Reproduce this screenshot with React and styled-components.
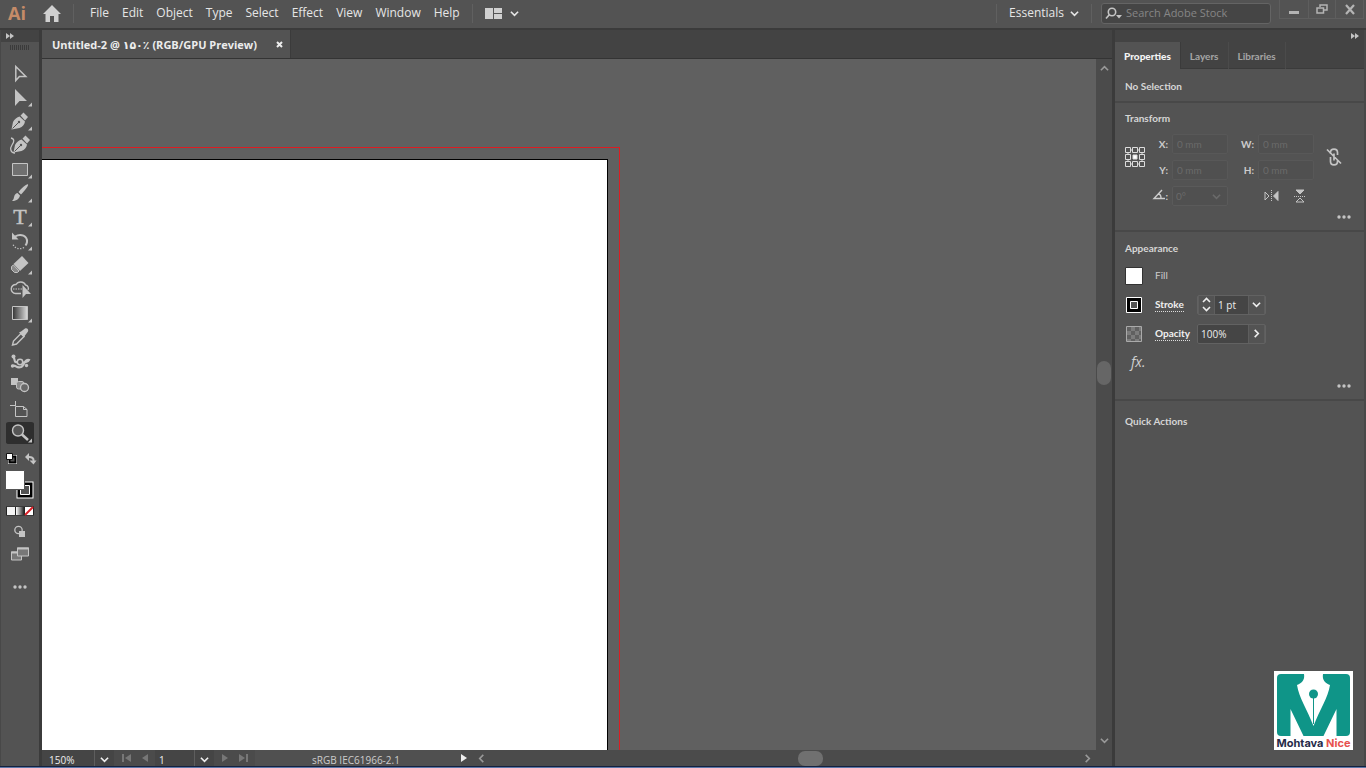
import React from "react";
import styled, { createGlobalStyle } from "styled-components";

const panel = "#535353";
const dark = "#434343";
const line = "#3b3b3b";
const soft = "#5e5e5e";
const field = "#454545";
const icon = "#c4c4c4";
const text = "#d6d6d6";
const muted = "#a6a6a6";

const GlobalStyle = createGlobalStyle`
  * {
    box-sizing: border-box;
  }

  body {
    margin: 0;
    background: ${panel};
    color: ${text};
    font-family: "Open Sans", "DejaVu Sans", sans-serif;
    font-size: 10px;
    line-height: 14px;
  }

  button, input {
    margin: 0;
    padding: 0;
    border: 0;
    background: none;
    color: inherit;
    font: inherit;
    outline: none;
    min-width: 0;
  }

  button {
    display: flex;
    align-items: center;
    justify-content: center;
    flex-shrink: 0;
  }

  svg {
    display: block;
    overflow: visible;
  }
`;

const Window = styled.div`
  display: grid;
  grid-template-rows: 30px 1fr 2px;
  height: 100vh;
`;

const Header = styled.header`
  display: flex;
  align-items: center;
  padding: 0 0 2px 8px;
  border-bottom: 2px solid ${line};
`;

const Brand = styled.span`
  width: 35px;
  color: #c58b68;
  font-size: 18px;
  font-weight: 700;
  line-height: 24px;
`;

const Divider = styled.span`
  width: 1px;
  height: 19px;
  margin: 0 ${(p) => p.$after || 12}px 0 ${(p) => p.$before || 12}px;
  background: #606060;
`;

const Menu = styled.nav`
  display: flex;
  gap: 13px;
`;

const MenuButton = styled.button`
  color: #e6e6e6;
  font-size: 12px;
  line-height: 16px;
  gap: ${(p) => p.$gap || 0}px;
`;

const Spacer = styled.div`
  flex: ${(p) => p.$grow || 1};
`;

const Search = styled.label`
  display: flex;
  align-items: center;
  gap: 4px;
  width: 170px;
  height: 21px;
  padding-left: 3px;
  border: 1px solid #646464;
  border-radius: 3px;
  background: ${field};
  color: ${icon};
`;

const SearchInput = styled.input`
  flex: 1;
  font-size: 11px;

  &::placeholder {
    color: #868686;
    opacity: 1;
  }
`;

const WindowControls = styled.div`
  display: grid;
  grid-template-columns: repeat(3, 1fr);
  align-self: flex-start;
  width: 85px;
  height: 19px;
  margin: 0 2px 0 8px;
  border: 1px solid ${soft};
  border-top: 0;
  color: #b4b4b4;

  button + button {
    border-left: 1px solid ${soft};
  }
`;

const Body = styled.div`
  display: grid;
  grid-template-columns: 42px 1fr 254px;
  min-height: 0;
`;

const Tools = styled.aside`
  display: flex;
  flex-direction: column;
  align-items: center;
  border-left: 1px solid #484848;
  border-right: 3px solid ${line};
  color: ${icon};
`;

const Collapse = styled.div`
  display: flex;
  align-items: center;
  justify-content: ${(p) => p.$end ? "flex-end" : "flex-start"};
  align-self: stretch;
  height: 12px;
  padding: 0 5px;
  background: ${dark};
  color: ${icon};
`;

const Grip = styled.div`
  width: 20px;
  height: 5px;
  margin: 3px 0 11px;
  background: repeating-linear-gradient(90deg, ${line} 0 1px, ${panel} 1px 2px);
`;

const Tool = styled.button`
  width: 28px;
  height: ${(p) => p.$height || 24}px;
  border-radius: 3px;
  background: ${(p) => p.$active ? "#2e2e2e" : "none"};
  background-clip: content-box;
  padding: ${(p) => p.$active ? "1px 0" : 0};
`;

const Document = styled.main`
  display: grid;
  grid-template-rows: 29px 1fr 16px;
  min-width: 0;
`;

const TabBar = styled.div`
  display: flex;
  background: ${dark};
  border-bottom: 1px solid #343434;
`;

const DocumentTab = styled.div`
  display: flex;
  align-items: center;
  justify-content: space-between;
  width: 249px;
  padding: 1px 7px 0 10px;
  border-right: 1px solid ${line};
  background: ${panel};
  color: #ececec;
  font-size: 11px;
  font-weight: 700;
`;

const Workspace = styled.div`
  display: grid;
  grid-template-columns: 1fr 16px;
  min-height: 0;
`;

const Canvas = styled.div`
  position: relative;
  overflow: hidden;
  background: #606060;
`;

const Bleed = styled.div`
  position: absolute;
  top: 88px;
  bottom: 0;
  left: 0;
  width: 578px;
  border: 0 solid #dd1c22;
  border-width: 1px 1px 0 0;
`;

const Artboard = styled.div`
  position: absolute;
  top: 100px;
  bottom: 0;
  left: 0;
  width: 566px;
  border: 0 solid #000;
  border-width: 1px 1px 0 0;
  background: #fff;
`;

const VerticalScroll = styled.div`
  display: flex;
  flex-direction: column;
  align-items: center;
  padding: 5px 0;
  background: #4b4b4b;
  color: #999;
`;

const Thumb = styled.span`
  width: ${(p) => p.$wide ? 25 : 14}px;
  height: ${(p) => p.$wide ? 15 : 24}px;
  border-radius: 7px;
  background: ${(p) => p.$wide ? "#707070" : "#666"};
`;

const StatusBar = styled.footer`
  display: flex;
  align-items: stretch;
  background: #4b4b4b;
  color: #eee;
`;

const StatusField = styled.label`
  display: flex;
  width: ${(p) => p.$width}px;
  padding-left: ${(p) => p.$inset}px;
  background: ${field};

  input {
    flex: 1;
    padding-top: 3px;
  }

  button {
    width: 20px;
    padding-top: 2px;
    border-left: 1px solid ${soft};
  }
`;

const Pager = styled.div`
  display: flex;
  align-items: center;
  justify-content: center;
  gap: 11px;
  width: 41px;
  color: #777;
`;

const Profile = styled.div`
  flex: 0 0 206px;
  padding: 3px 4px 0 0;
  background: #505050;
  color: #ccc;
  text-align: center;
`;

const HorizontalScroll = styled.div`
  flex: 1;
  display: flex;
  align-items: center;
  padding: 0 20px 0 10px;
  color: #999;
`;

const Properties = styled.aside`
  display: flex;
  flex-direction: column;
  border-left: 3px solid ${line};
  border-right: 2px solid #484848;
  font-family: Lato, sans-serif;
`;

const PanelTabs = styled.div`
  display: flex;
  height: 27px;
  background: ${dark};
  border-bottom: 1px solid ${line};
`;

const PanelTab = styled.button`
  height: 27px;
  padding: 0 9px;
  background: ${(p) => p.$active ? panel : "none"};
  border-right: 1px solid ${(p) => p.$active ? line : "#4b4b4b"};
  color: ${(p) => p.$active ? "#f4f4f4" : muted};
  font-weight: ${(p) => p.$active ? 900 : 700};
`;

const Section = styled.section`
  display: flex;
  flex-direction: column;
  padding: ${(p) => p.$top || 10}px 12px ${(p) => p.$bottom || 10}px 10px;
  border-bottom: ${(p) => p.$last ? 0 : "2px solid #484848"};
`;

const Title = styled.h2`
  margin: 0;
  color: ${text};
  font-size: 10px;
  font-weight: 700;
  line-height: 14px;
`;

const TransformGrid = styled.div`
  display: grid;
  grid-template-columns: 20px 19px 56px 22px 56px 32px;
  grid-template-rows: repeat(3, 20px);
  gap: 6px 4px;
  align-items: center;
  margin-top: 9px;
`;

const Reference = styled.button`
  grid-row: 1 / 3;
`;

const Link = styled.button`
  grid-row: 1 / 3;
  grid-column: 6;
`;

const FieldLabel = styled.label`
  display: flex;
  justify-content: flex-end;
  color: #ccc;
  font-weight: 700;
`;

const Measure = styled.input`
  width: 56px;
  height: 20px;
  padding-left: 4px;
  border: 1px solid #585858;
  border-radius: 2px;
  background: #505050;

  &:disabled {
    color: #6a6a6a;
  }
`;

const Angle = styled.div`
  display: flex;
  align-items: center;
  width: 56px;
  height: 20px;
  padding-right: 6px;
  border: 1px solid #5a5a5a;
  border-radius: 2px;
  background: #505050;
  color: #6a6a6a;

  input {
    flex: 1;
    padding-left: 3px;
  }
`;

const Flips = styled.div`
  grid-column: 5 / 7;
  display: flex;
  gap: 16px;
  padding-left: 6px;
`;

const More = styled.button`
  align-self: flex-end;
  height: 6px;
  margin: ${(p) => p.$top}px 1px 0 0;
`;

const Rows = styled.div`
  margin-top: 6px;
`;

const Row = styled.div`
  display: grid;
  grid-template-columns: 18px 30px auto;
  column-gap: 12px;
  align-items: center;
  height: 29px;
`;

const Option = styled.label`
  justify-self: start;
  border-bottom: ${(p) => p.$linked ? "1px dotted #ddd" : 0};
  color: ${(p) => p.$linked ? "#f0f0f0" : "#ccc"};
  font-weight: ${(p) => p.$linked ? 700 : 400};
  line-height: 13px;
`;

const Combo = styled.div`
  display: flex;
  width: 69px;
  height: 20px;
  border: 1px solid #626262;
  border-radius: 2px;
  background: ${field};
  color: #eee;
  font-family: "Open Sans", sans-serif;

  input {
    flex: 1;
    padding-left: 3px;
  }

  button {
    width: 17px;
    background: ${panel};
    border: 0 solid ${soft};
    border-width: 0 1px;
  }
`;

const Effects = styled.button`
  align-self: flex-start;
  margin: 5px 0 0 6px;
  color: #d0d0d0;
  font-family: "Open Sans", sans-serif;
  font-size: 14px;
  font-style: italic;
  line-height: 18px;
`;

const TaskEdge = styled.div`
  border-top: 1px solid #14213d;
  background: #5b76a8;
`;

const Watermark = styled.div`
  position: fixed;
  right: 13px;
  bottom: 18px;
  width: 79px;
  height: 79px;
  background: #fff;
  color: #262a48;
  font-family: Inter, sans-serif;
  font-size: 11px;
  font-weight: 700;
  line-height: 14px;
  text-align: center;
  white-space: nowrap;

  em {
    color: #e7524e;
    font-style: normal;
  }
`;

const Chevron = ({ dir = "down", size = 9 }) => {
  const turn = { down: 0, left: 90, up: 180, right: 270 }[dir];
  return (
    <svg width={size} height={size} viewBox="0 0 10 10" fill="none" stroke="currentColor" strokeWidth="1.8">
      <path d="M1 3l4 4 4-4" transform={`rotate(${turn} 5 5)`} />
    </svg>
  );
};

const DoubleArrow = () => (
  <svg width="8" height="6" fill="currentColor">
    <path d="M0 0l4 3-4 3zM4 0l4 3-4 3z" />
  </svg>
);

const Dots = () => (
  <svg width="14" height="4" fill={icon}>
    <circle cx="2" cy="2" r="1.7" />
    <circle cx="7" cy="2" r="1.7" />
    <circle cx="12" cy="2" r="1.7" />
  </svg>
);

const nib = (
  <>
    <path d="M5.5 20.500l1.500-7.500c1.500-3 4-4.500 6.500-5.500l5.500 5c-.5 3-2.500 5.500-5.500 6.500zM14.500 6.500L17.500 3.500l4.500 4.500-3 3.500z" fill="currentColor" />
    <path d="M6.500 19.500l6-6" stroke={panel} />
    <circle cx="13" cy="13" r="1.2" fill={panel} />
  </>
);

const tools = [
  { name: "Selection", art: <path d="M9.8 5.5v14l3.6-4h6.4z" fill="none" stroke="currentColor" strokeWidth="1.5" /> },
  { name: "Direct Selection", more: true, art: <path d="M9 4v17l4.5-5H21z" fill="currentColor" /> },
  { name: "Pen", more: true, art: nib },
  {
    name: "Curvature",
    art: (
      <>
        <g transform="translate(2 -1)">{nib}</g>
        <path d="M5 5c4 1 3 4 1 7s-2 8 3 8" fill="none" stroke="currentColor" strokeWidth="1.3" />
      </>
    ),
  },
  { name: "Rectangle", more: true, art: <path d="M6.5 6.5h15v12h-15z" fill="#707070" stroke="currentColor" /> },
  {
    name: "Paintbrush",
    more: true,
    art: (
      <path d="M22 3.5c1 1-4 7-7 10l-2.5-2.5c3-3.5 8.5-8.5 9.5-7.5zM11.5 12l2.5 2.5c-1 4-4 5.5-8 5.5 2-1.5 1.5-3 2.5-5.5 .7-1.7 2-2 3-2.500z" fill="currentColor" />
    ),
  },
  {
    name: "Type",
    more: true,
    art: (
      <text
        x="14"
        y="19"
        textAnchor="middle"
        fontFamily="Liberation Serif, serif"
        fontSize="22"
        fill="currentColor"
        stroke="currentColor"
        strokeWidth="0.5"
      >
        T
      </text>
    ),
  },
  {
    name: "Rotate",
    more: true,
    art: (
      <g fill="none" stroke="currentColor">
        <path d="M9 7.5c6-3.5 12.5-.5 12 5.5-.2 1.5-.8 2.5-1.5 3.5" strokeWidth="2" />
        <path d="M18 18.5c-4 2.5-9 1-11-3" strokeWidth="1.3" strokeDasharray="1.3 1.5" />
        <path d="M6 3.5v7h6.5z" fill="currentColor" stroke="none" />
      </g>
    ),
  },
  {
    name: "Eraser",
    more: true,
    art: (
      <>
        <path d="M16 3l6.500 7-8.500 8-6.500-7z" fill="currentColor" />
        <path d="M7.500 12l5.500 6-1.500 1.500h-3l-3-3v-3z" fill="#8a8a8a" stroke="currentColor" />
      </>
    ),
  },
  {
    name: "Shape Builder",
    art: (
      <>
        <path d="M15 16.500H9.500a4.500 4.500 0 1 1 .5-9c2-3.500 8-3.500 9.500.5 2.500.5 3.500 3 2.500 5" fill="none" stroke="currentColor" strokeWidth="1.4" />
        <path d="M7 12h10" stroke="currentColor" strokeDasharray="1.5 1" />
        <path d="M16.500 8v13l3.500-4h5z" fill="currentColor" />
      </>
    ),
  },
  {
    name: "Gradient",
    more: true,
    art: (
      <>
        <linearGradient id="tool-gradient">
          <stop stopColor="#333" />
          <stop offset="1" stopColor="#ddd" />
        </linearGradient>
        <path d="M6.5 5.5h15v13h-15z" fill="url(#tool-gradient)" stroke="currentColor" />
      </>
    ),
  },
  {
    name: "Eyedropper",
    art: (
      <>
        <path d="M6.5 20l1-4 7.5-7.5 3 3-7.5 7.5z" fill="none" stroke="currentColor" strokeWidth="1.4" />
        <path d="M13 7.5l2-1 4-3c2-1 4 1 3 3l-3 4-1 2z" fill="currentColor" />
      </>
    ),
  },
  {
    name: "Puppet Warp",
    art: (
      <>
        <path d="M6 17c4-2 4 3 9 1 4-2 3-8 8-7-1 3-4 1-6 3M7 7c3 4 0 7 5 6" fill="none" stroke="currentColor" strokeWidth="2.2" />
        <circle cx="14" cy="13" r="2.7" fill={panel} stroke="currentColor" strokeWidth="1.5" />
        <circle cx="7.5" cy="7.5" r="2" fill="currentColor" />
        <circle cx="6.5" cy="17" r="1.7" fill="currentColor" />
        <circle cx="20.5" cy="16.5" r="1.7" fill="currentColor" />
      </>
    ),
  },
  {
    name: "Blend",
    art: (
      <>
        <path d="M5 5h7v7H5z" fill="currentColor" />
        <rect x="10.5" y="8.5" width="7.5" height="7.5" rx="2" fill="#8b8b8b" stroke="currentColor" />
        <circle cx="18.5" cy="14.5" r="4" fill="#686868" stroke="currentColor" strokeWidth="1.3" />
      </>
    ),
  },
  {
    name: "Artboard",
    art: (
      <path d="M4 8.5h6M9.5 4v5M9.5 9.5h8l3.5 3v7H9.5zM17.5 9.5v3H21" fill="none" stroke="currentColor" />
    ),
  },
  {
    name: "Zoom",
    more: true,
    active: true,
    art: (
      <>
        <circle cx="12" cy="9.5" r="5.5" fill="#555" stroke="currentColor" strokeWidth="1.4" />
        <path d="M16 13.500l6 5.500" stroke="currentColor" strokeWidth="2.5" />
      </>
    ),
  },
];

const ToolBar = () => (
  <Tools>
    <Collapse><DoubleArrow /></Collapse>
    <Grip />
    {tools.map(({ name, art, more, active }) => (
      <Tool key={name} aria-label={name} $active={active}>
        <svg width="28" height="24">
          {art}
          {more && <path d="M26 17.5v4h-4z" fill="currentColor" />}
        </svg>
      </Tool>
    ))}
    <Tool $height={25} aria-label="Default and swap colors">
      <svg width="28" height="24">
        <path d="M3.500 10.500h6v6h-6z" fill={panel} stroke="#fff" strokeWidth="3" />
        <path d="M3.500 10.500h6v6h-6z" fill={panel} stroke="#000" strokeWidth="2" />
        <path d="M.5 7.5h6v6h-6z" fill="#fff" stroke="#111" />
        <path d="M22 11c4-.5 6 1.5 5.500 4" fill="none" stroke="currentColor" strokeWidth="2" />
        <path d="M19 11l4-4v8zM23.500 14.500h7l-3 4z" fill="currentColor" />
      </svg>
    </Tool>
    <Tool $height={32} aria-label="Fill and stroke">
      <svg width="28" height="32">
        <path d="M14.5 15.5h9v9h-9z" fill={panel} stroke="#fff" strokeWidth="8" />
        <path d="M14.5 15.5h9v9h-9z" fill={panel} stroke="#000" strokeWidth="6" />
        <path d="M14.5 15.5h9v9h-9z" fill={panel} stroke="#fff" />
        <path d="M-.5.5h19v19h-19z" fill="#fff" stroke="#555" />
      </svg>
    </Tool>
    <Tool $height={18} aria-label="Fill type">
      <svg width="28" height="10">
        <linearGradient id="mode-gradient">
          <stop stopColor="#fff" />
          <stop offset="1" stopColor="#222" />
        </linearGradient>
        <path d="M0 .5h28v9H0z" fill="#222" />
        <path d="M1 1h8v8H1z" fill="#f4f4f4" />
        <path d="M10 1h8v8h-8z" fill="url(#mode-gradient)" />
        <path d="M19 1h8v8h-8z" fill="#fff" />
        <path d="M19 9l8-8" stroke="#d92128" strokeWidth="2" />
      </svg>
    </Tool>
    <Tool $height={21} aria-label="Drawing mode">
      <svg width="28" height="14" fill="currentColor">
        <circle cx="12.500" cy="6" r="3.700" fill="none" stroke="currentColor" strokeWidth="1.300" />
        <path d="M13 7h6v6h-6z" />
      </svg>
    </Tool>
    <Tool $height={26} aria-label="Screen mode">
      <svg width="28" height="16">
        <path d="M5.5 6h10v8h-10z" fill="#777" stroke="currentColor" />
        <path d="M5 6.5h11" stroke="currentColor" strokeWidth="2" />
        <path d="M11.5 2h11v8h-11z" fill="#777" stroke="currentColor" />
        <path d="M11 2.5h12" stroke="currentColor" strokeWidth="2" />
      </svg>
    </Tool>
    <Tool $height={40} aria-label="Edit toolbar"><Dots /></Tool>
  </Tools>
);

const menus = ["File", "Edit", "Object", "Type", "Select", "Effect", "View", "Window", "Help"];

const TopBar = () => (
  <Header>
    <Brand>Ai</Brand>
    <button aria-label="Home">
      <svg width="18" height="17" fill="#d0d0d0">
        <path d="M9 0l9 9h-2.5v8H11v-6H7v6H2.5V9H0z" />
      </svg>
    </button>
    <Divider $after={16} />
    <Menu>
      {menus.map((name) => (
        <MenuButton key={name}>{name}</MenuButton>
      ))}
    </Menu>
    <Divider />
    <MenuButton aria-label="Arrange documents" $gap={8}>
      <svg width="17" height="11" fill="#d0d0d0">
        <path d="M0 0h8v11H0zM9 0h8v5H9zM9 6h8v5H9z" />
      </svg>
      <Chevron />
    </MenuButton>
    <Spacer />
    <Divider />
    <MenuButton $gap={6}>Essentials<Chevron /></MenuButton>
    <Divider $after={9} />
    <Search>
      <svg width="17" height="13" fill="none" stroke="currentColor" strokeWidth="1.6">
        <circle cx="7" cy="5" r="3.7" />
        <path d="M4.5 7.5L1 11.5" />
        <path d="M11 8h6l-3 3.5z" fill="currentColor" stroke="none" />
      </svg>
      <SearchInput placeholder="Search Adobe Stock" aria-label="Search Adobe Stock" />
    </Search>
    <WindowControls>
      <button aria-label="Minimize">
        <svg width="10" height="10"><path d="M0 7h10v3H0z" fill="currentColor" /></svg>
      </button>
      <button aria-label="Restore">
        <svg width="12" height="10" fill="none" stroke="currentColor" strokeWidth="1.5">
          <path d="M4 3V1h7v5H8M1 4h6.5v5H1z" />
        </svg>
      </button>
      <button aria-label="Close">
        <svg width="10" height="9" stroke="currentColor" strokeWidth="2.2"><path d="M1 0l8 9M9 0L1 9" /></svg>
      </button>
    </WindowControls>
  </Header>
);

const Triangle = ({ left, bar }) => (
  <svg width={bar ? 9 : 6} height="8" fill="currentColor">
    <path
      d={bar ? "M0 0l6 4-6 4zM7 0h2v8H7z" : "M0 0l6 4-6 4z"}
      transform={left ? `translate(${bar ? 9 : 6} 0) scale(-1 1)` : undefined}
    />
  </svg>
);

const DocumentView = () => (
  <Document>
    <TabBar>
      <DocumentTab>
        <span>Untitled-2 @ ۱۵۰٪ (RGB/GPU Preview)</span>
        <button aria-label="Close document">
          <svg width="7" height="7" stroke="#eee" strokeWidth="2"><path d="M1 1l5 5M6 1L1 6" /></svg>
        </button>
      </DocumentTab>
    </TabBar>
    <Workspace>
      <Canvas>
        <Bleed />
        <Artboard />
      </Canvas>
      <VerticalScroll>
        <Chevron dir="up" />
        <Spacer $grow={9} />
        <Thumb />
        <Spacer $grow={11} />
        <Chevron />
      </VerticalScroll>
    </Workspace>
    <StatusBar>
      <StatusField $width={72} $inset={7}>
        <input defaultValue="150%" aria-label="Zoom level" />
        <button aria-label="Zoom presets"><Chevron /></button>
      </StatusField>
      <Pager>
        <Triangle left bar />
        <Triangle left />
      </Pager>
      <StatusField $width={59} $inset={4}>
        <input defaultValue="1" aria-label="Artboard number" />
        <button aria-label="Artboards"><Chevron /></button>
      </StatusField>
      <Pager>
        <Triangle />
        <Triangle bar />
      </Pager>
      <Profile>sRGB IEC61966-2.1</Profile>
      <button aria-label="Status options"><Triangle /></button>
      <HorizontalScroll>
        <Chevron dir="left" />
        <Spacer $grow={6} />
        <Thumb $wide />
        <Spacer $grow={5} />
        <Chevron dir="right" />
      </HorizontalScroll>
    </StatusBar>
  </Document>
);

const StrokeSwatch = () => (
  <svg width="18" height="18">
    <path d="M1.5 1.5h15v15h-15z" fill="#000" stroke="#fff" />
    <path d="M5.5 5.5h7v7h-7z" fill={panel} stroke="#fff" />
  </svg>
);

const OpacitySwatch = () => (
  <svg width="18" height="18">
    <path d="M1.5 1.5h15v15h-15z" fill="#606060" stroke="#aaa" />
    <path d="M2 6h4v4H2zM6 2h4v4H6zM10 6h4v4h-4zM6 10h4v4H6zM14 2h2v4h-2zM14 10h2v4h-2zM2 14h4v2H2zM10 14h4v2h-4z" fill="#7c7c7c" />
  </svg>
);

const PropertiesPanel = () => (
  <Properties>
    <Collapse $end><DoubleArrow /></Collapse>
    <PanelTabs>
      <PanelTab $active>Properties</PanelTab>
      <PanelTab>Layers</PanelTab>
      <PanelTab>Libraries</PanelTab>
    </PanelTabs>
    <Section $bottom={8}>
      <Title>No Selection</Title>
    </Section>
    <Section $top={8}>
      <Title>Transform</Title>
      <TransformGrid>
        <Reference aria-label="Reference point">
          <svg width="20" height="20" fill="none" stroke="#ddd">
            <path d="M5.500 3h2M12.500 3h2M5.500 17h2M12.500 17h2M3 5.500v2M3 12.500v2M17 5.500v2M17 12.500v2" />
            <path d="M.5.5h5v5h-5zM7.5.5h5v5h-5zM14.5.5h5v5h-5zM.5 7.5h5v5h-5zM14.5 7.5h5v5h-5zM.5 14.5h5v5h-5zM7.5 14.5h5v5h-5zM14.5 14.5h5v5h-5z" />
            <path d="M8 8h4v4H8z" fill="#fff" />
          </svg>
        </Reference>
        <FieldLabel htmlFor="x">X:</FieldLabel>
        <Measure id="x" defaultValue="0 mm" disabled />
        <FieldLabel htmlFor="w">W:</FieldLabel>
        <Measure id="w" defaultValue="0 mm" disabled />
        <Link aria-label="Constrain proportions">
          <svg width="16" height="18" fill="none" stroke={icon} strokeWidth="1.7">
            <path d="M4.500 6V4.500c0-4.500 7-4.500 7 0V7M4.500 9v4.500c0 4.500 7 4.500 7 0V12M8 5.500v7M1 1.500l14 14" />
          </svg>
        </Link>
        <FieldLabel htmlFor="y">Y:</FieldLabel>
        <Measure id="y" defaultValue="0 mm" disabled />
        <FieldLabel htmlFor="h">H:</FieldLabel>
        <Measure id="h" defaultValue="0 mm" disabled />
        <span />
        <FieldLabel htmlFor="angle" aria-label="Rotate">
          <svg width="12" height="12" fill="none" stroke="currentColor" strokeWidth="1.4">
            <path d="M9 1L1 9.5h11M5 5c2 0 3 2 3 4" />
          </svg>
          :
        </FieldLabel>
        <Angle>
          <input id="angle" defaultValue="0°" disabled />
          <Chevron />
        </Angle>
        <Flips>
          <button aria-label="Flip horizontally">
            <svg width="14" height="12" fill="none" stroke={icon}>
              <path d="M1 2l4 4-4 4z" />
              <path d="M7.5 0v12" strokeDasharray="1 1" />
              <path d="M14 1.5v9L9.5 6z" fill={icon} />
            </svg>
          </button>
          <button aria-label="Flip vertically">
            <svg width="12" height="14" fill="none" stroke={icon}>
              <path d="M2 1h8L6 5z" fill={icon} />
              <path d="M0 7.5h12" strokeDasharray="1 1" />
              <path d="M2 13h8L6 9z" />
            </svg>
          </button>
        </Flips>
      </TransformGrid>
      <More aria-label="More transform options" $top={8}><Dots /></More>
    </Section>
    <Section $top={9}>
      <Title>Appearance</Title>
      <Rows>
        <Row>
          <svg width="18" height="18"><path d="M.5.5h17v17H.5z" fill="#fff" stroke="#333" /></svg>
          <Option as="span">Fill</Option>
        </Row>
        <Row>
          <StrokeSwatch />
          <Option htmlFor="stroke" $linked>Stroke</Option>
          <Combo>
            <button aria-label="Step stroke weight">
              <svg width="9" height="15" fill="none" stroke="currentColor" strokeWidth="1.6">
                <path d="M1 5l3.5-3.5L8 5M1 10l3.5 3.5L8 10" />
              </svg>
            </button>
            <input id="stroke" defaultValue="1 pt" />
            <button aria-label="Stroke presets"><Chevron /></button>
          </Combo>
        </Row>
        <Row>
          <OpacitySwatch />
          <Option htmlFor="opacity" $linked>Opacity</Option>
          <Combo>
            <input id="opacity" defaultValue="100%" />
            <button aria-label="Opacity slider"><Chevron dir="right" /></button>
          </Combo>
        </Row>
      </Rows>
      <Effects>fx.</Effects>
      <More aria-label="More appearance options" $top={12}><Dots /></More>
    </Section>
    <Section $top={13} $last>
      <Title>Quick Actions</Title>
    </Section>
  </Properties>
);

const Logo = () => (
  <Watermark>
    <svg width="79" height="65">
      <rect x="3" y="3" width="73" height="62" rx="4" fill="#0f9588" />
      <path d="M30 3h19c-1 6 2 9 7 11-2 13-10 24-16.500 41C33 38 25 27 23 14c5-2 8-5 7-11z" fill="#fff" />
      <path d="M16.5 38l13 27h-13zM62.5 38v27h-13z" fill="#fff" />
      <circle cx="39.5" cy="23" r="4.5" fill="#0f9588" />
      <path d="M39.5 25v28" stroke="#0f9588" />
    </svg>
    Mohtava <em>Nice</em>
  </Watermark>
);

const App = () => (
  <>
    <GlobalStyle />
    <Window>
      <TopBar />
      <Body>
        <ToolBar />
        <DocumentView />
        <PropertiesPanel />
      </Body>
      <TaskEdge />
    </Window>
    <Logo />
  </>
);

export default App;
